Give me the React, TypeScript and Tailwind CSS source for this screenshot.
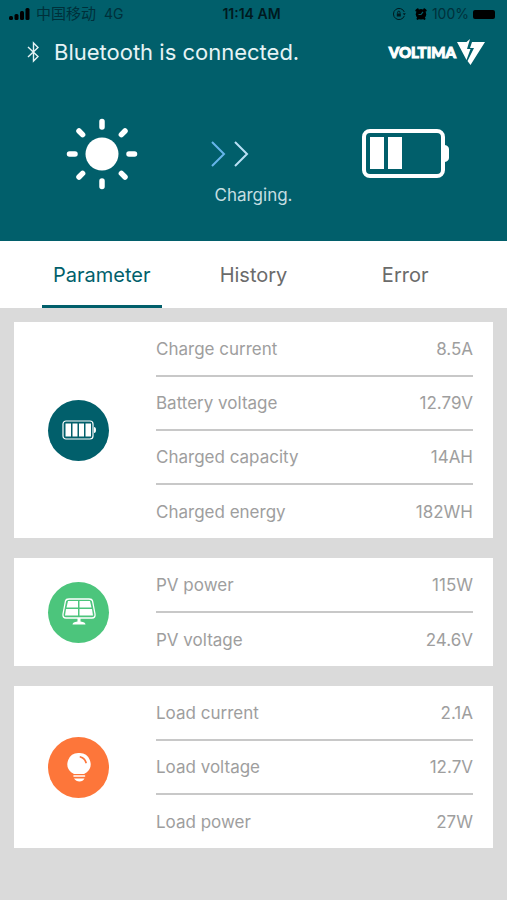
import React, { useState } from "react";

interface IReading {
    label: string;
    value: string;
}

interface IReadingCardProps {
    icon: React.ReactNode;
    color: string;
    readings: IReading[];
}

const TABS = ["Parameter", "History", "Error"];

const BATTERY: IReading[] = [
    { label: "Charge current", value: "8.5A" },
    { label: "Battery voltage", value: "12.79V" },
    { label: "Charged capacity", value: "14AH" },
    { label: "Charged energy", value: "182WH" },
];

const SOLAR: IReading[] = [
    { label: "PV power", value: "115W" },
    { label: "PV voltage", value: "24.6V" },
];

const LOAD: IReading[] = [
    { label: "Load current", value: "2.1A" },
    { label: "Load voltage", value: "12.7V" },
    { label: "Load power", value: "27W" },
];

function StatusBar() {
    return (
        <div className="grid grid-cols-3 items-center h-7 pl-2 pr-3 text-[13px] text-[#00303a]">
            <div className="flex items-center gap-1">
                <svg width="24" height="14" viewBox="0 0 24 14" fill="#000">
                    <rect x="1" y="9" width="4" height="4" rx="1.5" />
                    <rect x="6.500" y="7" width="4" height="6" rx="1.5" />
                    <rect x="12" y="4" width="4" height="9" rx="1.5" />
                    <rect x="17.500" y="1" width="4" height="12" rx="1.5" />
                </svg>
                <span className="text-[15px] leading-5">中国移动</span>
                <span className="pl-1 text-sm">4G</span>
            </div>
            <span className="text-center text-sm font-semibold text-[#001a1f]">11:14 AM</span>
            <div className="flex items-center justify-end gap-1">
                <svg width="14" height="14" viewBox="0 0 14 14" fill="none" stroke="#001a1f">
                    <path d="M12.3 5A5.6 5.6 0 1 0 12.3 9" />
                    <path d="M10.8 6.2h3L12.3 8.4z" fill="#001a1f" stroke="none" />
                    <rect x="4.8" y="6.5" width="4" height="3" fill="#001a1f" stroke="none" />
                    <path d="M5.6 6.5V5.4a1.2 1.2 0 0 1 2.4 0v1.1" />
                </svg>
                <svg width="14" height="14" viewBox="0 0 14 14" className="ml-1">
                    <circle cx="7" cy="7.2" r="5.2" fill="#000" />
                    <path d="M2.4 3.6 3.8 2.400M11.600 3.600 10.200 2.400M3.600 11.800l.8-.8M10.400 11.800l-.8-.8" stroke="#000" strokeWidth="2.2" strokeLinecap="round" />
                    <path d="M9 4.800 7 7.500H4.500" stroke="#015f6b" strokeWidth="1.2" fill="none" />
                </svg>
                <span className="text-sm">100%</span>
                <svg width="22" height="9" viewBox="0 0 22 9">
                    <rect width="22" height="9" rx="2" fill="#000" />
                </svg>
            </div>
        </div>
    );
}

function Logo() {
    return (
        <div className="flex items-center text-white">
            <span className="font-[Lato,sans-serif] font-black text-[15px] leading-6 [-webkit-text-stroke:1px_#fff]">VOLTIMA</span>
            <svg width="28" height="26" viewBox="0 0 28 26" fill="#fff" className="ml-px">
                <path d="M0 3h9.500L13 0l-3 10h3.500L9.500 21z" />
                <path d="M15 3h13L13.500 26l-3-4L17 9h-4z" />
            </svg>
        </div>
    );
}

function BluetoothIcon() {
    return (
        <svg width="14" height="22" viewBox="0 0 14 22" fill="none" stroke="#e6f3f5" strokeWidth="1.4">
            <path d="M2 6 12 15.500 7.500 20V2L12 6.500 2 16" />
        </svg>
    );
}

function SunIcon() {
    return (
        <svg width="72" height="72" viewBox="0 0 72 72" stroke="#fff" strokeWidth="5.5" strokeLinecap="round">
            <circle cx="36" cy="36" r="16.5" fill="#fff" stroke="none" />
            <path d="M36 3.5v5.5M36 63v5.5M3.5 36H9M63 36h5.5M13 13l3.6 3.6M55.4 55.4l3.6 3.6M13 59l3.6-3.6M55.4 16.6 59 13" />
        </svg>
    );
}

function ChargeBattery() {
    return (
        <svg width="88" height="50" viewBox="0 0 88 50">
            <rect x="3" y="3" width="79" height="45" rx="6" fill="none" stroke="#fff" strokeWidth="4" />
            <path d="M83 17c3 0 5 2 5 4v9c0 2-2 4-5 4z" fill="#fff" />
            <path d="M9 9h14v32H9zM27 9h14v32H27z" fill="#fff" />
        </svg>
    );
}

function BatteryIcon() {
    return (
        <svg width="34" height="20" viewBox="0 0 34 20">
            <rect x="1" y="1" width="30" height="18" rx="3" fill="none" stroke="#fff" strokeWidth="1.2" />
            <path d="M32 7q2 0 2 3t-2 3z" fill="#fff" />
            <path d="M3.500 3.500h5.500v13H3.500zM10.500 3.500h5v13h-5zM17 3.500h5v13h-5zM23.500 3.500H29v13h-5.500z" fill="#fff" />
        </svg>
    );
}

function PanelIcon() {
    return (
        <svg width="34" height="28" viewBox="0 0 34 28">
            <path d="M7 1h20q3 0 3.500 2l2.500 13q.5 4-3 4H4q-3.500 0-3-4L3.500 3Q4 1 7 1z" fill="none" stroke="#fff" strokeWidth="1.3" />
            <path d="M6 3h10v6.500H4.500zM17.500 3H28l1.500 6.500h-12zM4 11h12v6.500H3zM17.500 11h12.500l1 6.500H17.500z" fill="#fff" />
            <path d="M15.500 20h3v3.500q5 .5 5 3h-13q0-2.500 5-3z" fill="#fff" />
        </svg>
    );
}

function BulbIcon() {
    return (
        <svg width="24" height="30" viewBox="0 0 24 30">
            <path d="M12 1a11 11 0 0 1 7.500 19.500l-2.500 1.500H7l-2.500-1.500A11 11 0 0 1 12 1z" fill="#fff" />
            <path d="M13.500 5q4 1 5.500 5.500" fill="none" stroke="#fd763a" strokeWidth="1.8" strokeLinecap="round" />
            <path d="M7 24h10.500" stroke="#fff" strokeWidth="1.6" strokeLinecap="round" />
            <path d="M7 26.500h10.500q-1.500 3-5 3t-5.500-3z" fill="#fff" />
        </svg>
    );
}

function ReadingCard({ icon, color, readings }: IReadingCardProps) {
    return (
        <section className="flex items-center bg-white pl-[34px] pr-5">
            <div className={`flex items-center justify-center shrink-0 size-[61px] mr-[47px] rounded-full ${color}`}>
                {icon}
            </div>
            <table className="flex-1 text-[17px] leading-6 text-[#9e9e9e]">
                <tbody className="divide-y-2 divide-[#c8c8c8]">
                    {readings.map((item) => (
                        <tr key={item.label} className="h-[54px]">
                            <th scope="row" className="font-normal text-left">{item.label}</th>
                            <td className="text-right">{item.value}</td>
                        </tr>
                    ))}
                </tbody>
            </table>
        </section>
    );
}

export default function App() {
    const [tab, setTab] = useState("Parameter");

    return (
        <div className="min-h-screen bg-[#dadada] font-[Inter,'Noto_Sans_CJK_SC',sans-serif]">
            <header className="bg-[#015f6b] pb-9">
                <StatusBar />

                {/* Connection */}
                <div className="flex items-center justify-between h-12 pl-[26px] pr-[22px]">
                    <div className="flex items-center gap-3.5">
                        <BluetoothIcon />
                        <h1 className="text-[22px] leading-7 text-[#e6f3f5]">Bluetooth is connected.</h1>
                    </div>
                    <Logo />
                </div>

                {/* Charging state */}
                <div className="grid grid-cols-3 px-[26px] pt-[42px] h-[129px]">
                    <div className="flex justify-center">
                        <SunIcon />
                    </div>
                    <div className="flex flex-col items-center pt-5">
                        <svg width="86" height="30" viewBox="0 0 86 30" fill="none" strokeWidth="2">
                            <path d="M2 4 14 16 2 28" stroke="#66b5ea" />
                            <path d="M25 4 37 16 25 28" stroke="#b9e0f5" />
                        </svg>
                        <span className="pt-[15px] text-[17px] leading-6 text-[#c5dee1]">Charging.</span>
                    </div>
                    <div className="flex justify-center pt-2.5">
                        <ChargeBattery />
                    </div>
                </div>
            </header>

            <nav className="grid grid-cols-3 px-[26px] bg-white">
                {TABS.map((name) => (
                    <button
                        key={name}
                        type="button"
                        onClick={() => setTab(name)}
                        className={
                            name === tab
                                ? "w-[120px] h-[67px] mx-auto pt-[3px] text-xl text-[#015f6b] border-b-3 border-[#015f6b]"
                                : "w-[120px] h-[67px] mx-auto text-xl text-[#6b6b6b]"
                        }
                    >
                        {name}
                    </button>
                ))}
            </nav>

            <main className="flex flex-col gap-5 px-3.5 py-3.5">
                <ReadingCard icon={<BatteryIcon />} color="bg-[#015f6b]" readings={BATTERY} />
                <ReadingCard icon={<PanelIcon />} color="bg-[#4cc57c]" readings={SOLAR} />
                <ReadingCard icon={<BulbIcon />} color="bg-[#fd763a]" readings={LOAD} />
            </main>
        </div>
    );
}
